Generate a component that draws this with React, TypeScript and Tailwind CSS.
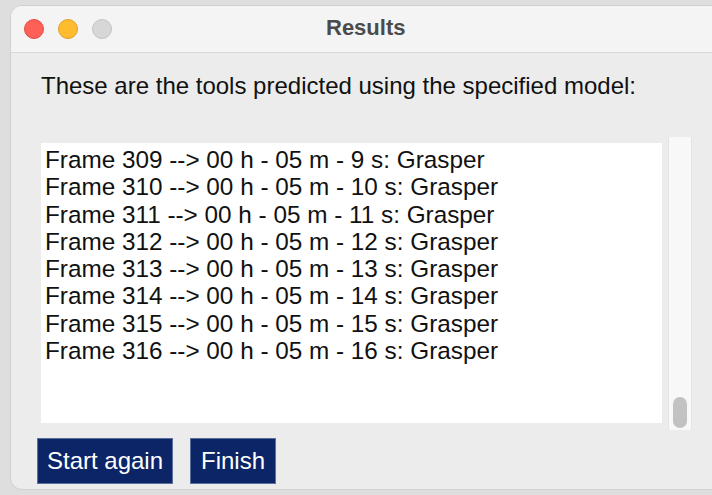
import React from "react";

const rows = [
  "Frame 309 --> 00 h - 05 m - 9 s: Grasper",
  "Frame 310 --> 00 h - 05 m - 10 s: Grasper",
  "Frame 311 --> 00 h - 05 m - 11 s: Grasper",
  "Frame 312 --> 00 h - 05 m - 12 s: Grasper",
  "Frame 313 --> 00 h - 05 m - 13 s: Grasper",
  "Frame 314 --> 00 h - 05 m - 14 s: Grasper",
  "Frame 315 --> 00 h - 05 m - 15 s: Grasper",
  "Frame 316 --> 00 h - 05 m - 16 s: Grasper",
];

export default function App() {
  return (
    <div
      className="w-[712px] h-[495px] overflow-hidden bg-[#dedede] pt-[5px] pl-[10px]"
      style={{ fontFamily: '"Liberation Sans", Arial, sans-serif' }}
    >
      <div className="w-[720px] h-[485px] rounded-l-[12px] bg-[#ececec] border border-[#d0d0d0] flex flex-col overflow-hidden">
        {/* title bar */}
        <div className="h-[47px] shrink-0 bg-[#f4f4f4] border-b border-[#d8d8d8] flex items-center relative">
          <div className="flex items-center gap-[14px] pl-[13px]">
            <span className="w-[20px] h-[20px] rounded-full bg-[#fe5f57] border border-[#e24b43]" />
            <span className="w-[20px] h-[20px] rounded-full bg-[#febc2e] border border-[#e0a123]" />
            <span className="w-[20px] h-[20px] rounded-full bg-[#d7d7d7] border border-[#c4c4c4]" />
          </div>
          <div className="absolute left-[315px] top-[9px] text-[22px] leading-[26px] font-bold text-[#4b4b4b]">
            Results
          </div>
        </div>

        {/* body */}
        <div className="flex flex-col pl-[30px]">
          <div className="mt-[20px] text-[24px] leading-[26px] text-[#111] whitespace-nowrap">
            These are the tools predicted using the specified model:
          </div>

          <div className="mt-[38px] flex items-start">
            <div className="w-[621px] h-[280px] mt-[6px] bg-white pl-[4px] pt-[3px]">
              {rows.map((r) => (
                <div key={r} className="text-[24.3px] leading-[27.3px] text-[#111] whitespace-nowrap">
                  {r}
                </div>
              ))}
            </div>
            <div className="ml-[6px] w-[24px] h-[293px] bg-[#f8f8f8] border-x border-[#e4e4e4] flex flex-col justify-end items-center pb-[2px]">
              <div className="w-[14px] h-[31px] rounded-full bg-[#c2c2c2]" />
            </div>
          </div>

          <div className="mt-[8px] flex gap-[17px] -ml-[4px]">
            <button className="w-[136px] h-[46px] bg-[#0b2566] border border-[#5b6f9c] text-white text-[24px] leading-none flex items-center justify-center">
              Start again
            </button>
            <button className="w-[86px] h-[46px] bg-[#0b2566] border border-[#5b6f9c] text-white text-[24px] leading-none flex items-center justify-center">
              Finish
            </button>
          </div>
        </div>
      </div>
    </div>
  );
}
